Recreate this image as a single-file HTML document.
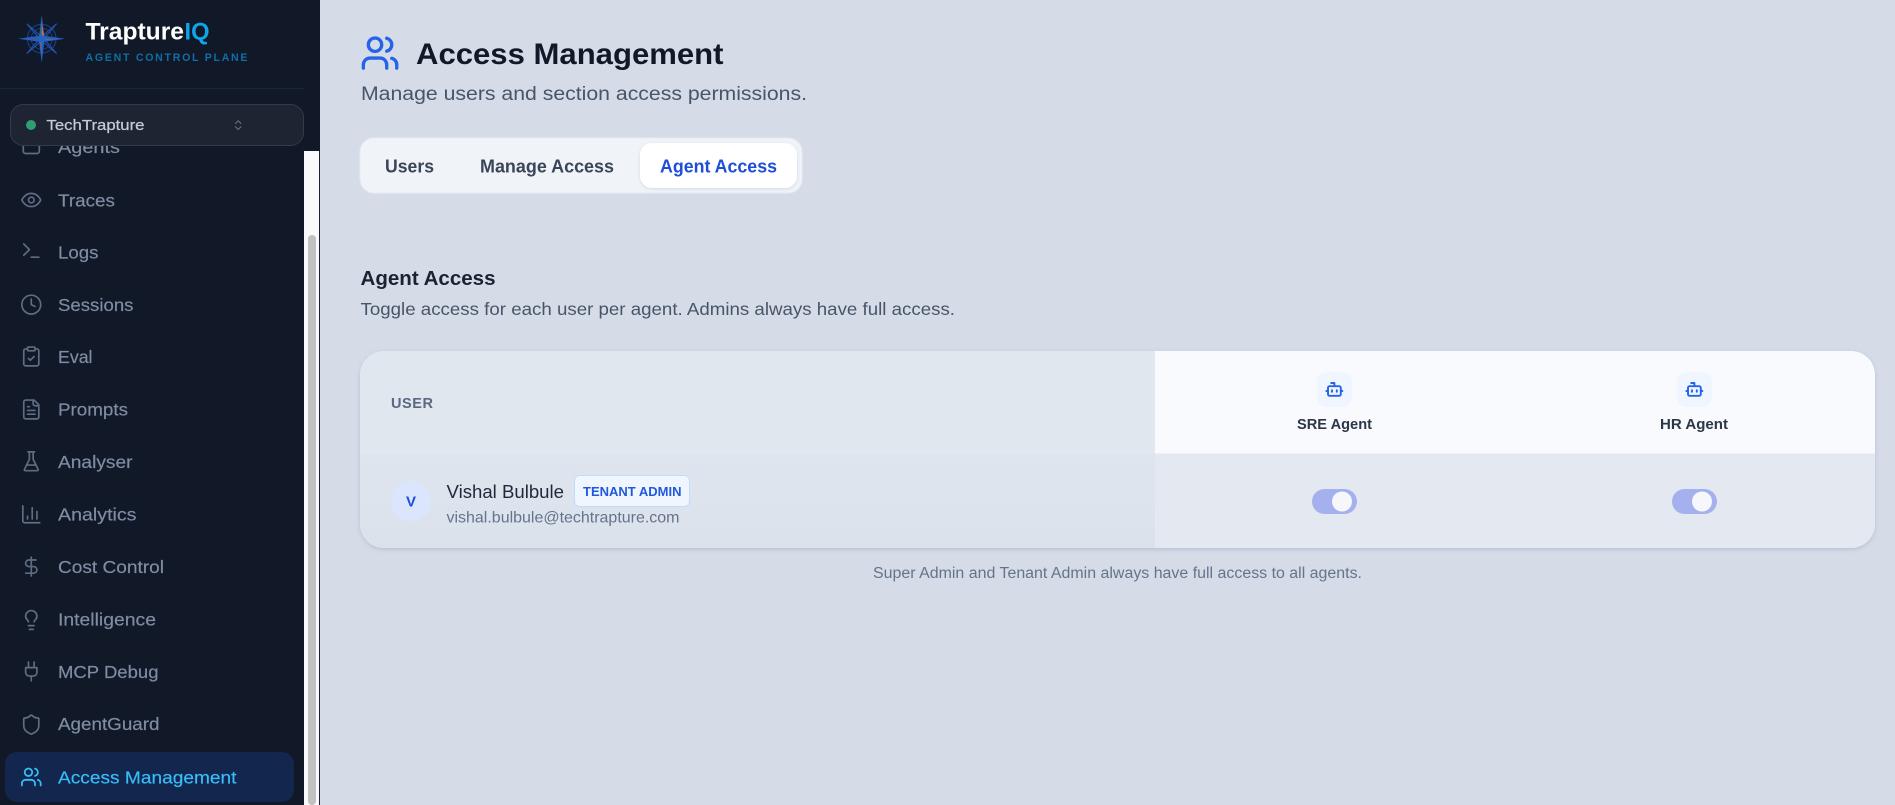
<!DOCTYPE html>
<html lang="en">
<head>
<meta charset="utf-8">
<title>Access Management</title>
<style>
html,body{margin:0;padding:0;width:1895px;height:805px;overflow:hidden;background:#d5dce8}
svg{display:block}
text{font-family:"Liberation Sans",Arial,sans-serif}
.nav text{font-size:17.4px;fill:#7f8da4;stroke:#7f8da4;stroke-width:.18}
.ic{fill:none;stroke:#5f6c82;stroke-width:1.8;stroke-linecap:round;stroke-linejoin:round}
.ic2{fill:none;stroke:#2563eb;stroke-width:2.4;stroke-linecap:round;stroke-linejoin:round}
.b{font-weight:700}
</style>
</head>
<body>
<svg width="1895" height="805" viewBox="0 0 1895 805" xmlns="http://www.w3.org/2000/svg">
<defs>
<clipPath id="card"><rect x="360" y="351" width="1515" height="197" rx="24"/></clipPath>
<filter id="sh" x="-5%" y="-10%" width="110%" height="120%"><feDropShadow dx="0" dy="1.5" stdDeviation="2" flood-color="#64748b" flood-opacity=".28"/></filter>
<filter id="sh2" x="-10%" y="-20%" width="120%" height="150%"><feDropShadow dx="0" dy="1" stdDeviation="1.5" flood-color="#64748b" flood-opacity=".22"/></filter>
<linearGradient id="rowL" x1="0" y1="0" x2="0" y2="1"><stop offset="0" stop-color="#dfe5ee"/><stop offset="1" stop-color="#dce2ec"/></linearGradient>
</defs>

<!-- page -->
<rect width="1895" height="805" fill="#d5dce8"/>

<!-- sidebar -->
<rect width="320" height="805" fill="#111827"/>
<rect x="304" y="151" width="15" height="654" fill="#fafafa"/>
<rect x="308" y="235" width="8" height="570" rx="4" fill="#c1c1c1"/>
<rect x="319" y="151" width="1" height="654" fill="#1a2130"/>

<!-- nav -->
<g class="nav">
<text x="58" y="152.8" textLength="62" lengthAdjust="spacingAndGlyphs">Agents</text>
<text x="58" y="206.3" textLength="57" lengthAdjust="spacingAndGlyphs">Traces</text>
<text x="58" y="258.4" textLength="40.5" lengthAdjust="spacingAndGlyphs">Logs</text>
<text x="58" y="310.8" textLength="75.5" lengthAdjust="spacingAndGlyphs">Sessions</text>
<text x="58" y="363.2" textLength="34.5" lengthAdjust="spacingAndGlyphs">Eval</text>
<text x="58" y="415.6" textLength="70" lengthAdjust="spacingAndGlyphs">Prompts</text>
<text x="58" y="468" textLength="74.5" lengthAdjust="spacingAndGlyphs">Analyser</text>
<text x="58" y="520.5" textLength="78.5" lengthAdjust="spacingAndGlyphs">Analytics</text>
<text x="58" y="572.9" textLength="106" lengthAdjust="spacingAndGlyphs">Cost Control</text>
<text x="58" y="625.3" textLength="98" lengthAdjust="spacingAndGlyphs">Intelligence</text>
<text x="58" y="677.8" textLength="100.5" lengthAdjust="spacingAndGlyphs">MCP Debug</text>
<text x="58" y="730.2" textLength="101.5" lengthAdjust="spacingAndGlyphs">AgentGuard</text>
</g>
<g class="ic">
<rect x="23.3" y="136" width="16" height="17.5" rx="2.4" stroke-width="1.7"/>
<g transform="translate(20,188.7) scale(.94)"><path d="M2 12s3-7 10-7 10 7 10 7-3 7-10 7-10-7-10-7Z"/><circle cx="12" cy="12" r="3"/></g>
<g transform="translate(20,239.3) scale(.94)"><path d="M4 17l6-6-6-6"/><path d="M12 19h8"/></g>
<g transform="translate(20,293.3) scale(.94)"><circle cx="12" cy="12" r="10"/><path d="M12 6v6l4 2"/></g>
<g transform="translate(20,345.2) scale(.94)"><rect x="8" y="2" width="8" height="4" rx="1"/><path d="M16 4h2a2 2 0 0 1 2 2v14a2 2 0 0 1-2 2H6a2 2 0 0 1-2-2V6a2 2 0 0 1 2-2h2"/><path d="m9 14 2 2 4-4"/></g>
<g transform="translate(20,398.2) scale(.94)"><path d="M15 2H6a2 2 0 0 0-2 2v16a2 2 0 0 0 2 2h12a2 2 0 0 0 2-2V7Z"/><path d="M14 2v4a2 2 0 0 0 2 2h4"/><path d="M10 9H8M16 13H8M16 17H8"/></g>
<g transform="translate(20,450) scale(.94)"><path d="M10 2v7.527a2 2 0 0 1-.211.896L4.72 20.55a1 1 0 0 0 .9 1.45h12.76a1 1 0 0 0 .9-1.45l-5.069-10.127A2 2 0 0 1 14 9.527V2"/><path d="M8.5 2h7"/><path d="M7 16h10"/></g>
<g transform="translate(20,503) scale(.94)"><path d="M3 3v16a2 2 0 0 0 2 2h16"/><path d="M18 17V9M13 17V5M8 17v-3"/></g>
<g transform="translate(20,555.3) scale(.94)"><path d="M12 2v20"/><path d="M17 5H9.5a3.5 3.5 0 0 0 0 7h5a3.5 3.5 0 0 1 0 7H6"/></g>
<g transform="translate(20,608.7) scale(.94)"><path d="M15 14c.2-1 .7-1.7 1.5-2.5 1-.9 1.5-2.2 1.5-3.5A6 6 0 0 0 6 8c0 1 .2 2.2 1.5 3.5.7.7 1.3 1.5 1.5 2.5"/><path d="M9 18h6M10 22h4"/></g>
<g transform="translate(20,660.1) scale(.94)"><path d="M12 22v-5M9 8V2M15 8V2"/><path d="M18 8v5a4 4 0 0 1-4 4h-4a4 4 0 0 1-4-4V8Z"/></g>
<g transform="translate(20,713.3) scale(.94)"><path d="M20 13c0 5-3.5 7.5-7.66 8.95a1 1 0 0 1-.67-.01C7.5 20.5 4 18 4 13V6a1 1 0 0 1 1-1c2 0 4.5-1.2 6.24-2.72a1.17 1.17 0 0 1 1.52 0C14.51 3.81 17 5 19 5a1 1 0 0 1 1 1z"/></g>
</g>

<!-- active item -->
<rect x="5" y="752" width="289" height="50" rx="12" fill="#12264e"/>
<g fill="none" stroke="#38bdf8" stroke-width="1.9" stroke-linecap="round" stroke-linejoin="round" transform="translate(20,765.7) scale(.94)"><path d="M16 21v-2a4 4 0 0 0-4-4H6a4 4 0 0 0-4 4v2"/><circle cx="9" cy="7" r="4"/><path d="M22 21v-2a4 4 0 0 0-3-3.87"/><path d="M16 3.13a4 4 0 0 1 0 7.75"/></g>
<text x="58" y="783.3" font-size="17.4" fill="#38bdf8" stroke="#38bdf8" stroke-width=".18" textLength="178.5" lengthAdjust="spacingAndGlyphs">Access Management</text>

<!-- brand header (covers scrolled items) -->
<rect width="320" height="89" fill="#111827"/>
<rect y="88" width="319" height="1" fill="#1d2635"/>
<rect y="89" width="304" height="57" fill="#111827"/>
<rect x="304" y="0" width="15" height="151" fill="#111827"/>

<!-- logo -->
<g transform="translate(41.7,38.7)">
<circle r="14.3" fill="none" stroke="#1b3a7c" stroke-width="1.3"/>
<circle r="10.5" fill="none" stroke="#1b3a7c" stroke-width="1"/>
<path d="M-15-15 L-1.5-3.5 L-3.5-1.5Z M15-15 L1.5-3.5 L3.5-1.5Z M-15 15 L-1.5 3.5 L-3.5 1.5Z M15 15 L1.5 3.5 L3.5 1.5Z" fill="#14295c" stroke="#2557b8" stroke-width=".9"/>
<path d="M0-24 L2.6-3 L23.5 0 L2.6 3 L0 24 L-2.6 3 L-23.5 0 L-2.6-3Z" fill="#2460c4"/>
<path d="M0-16 L2.6-3 L0-3Z" fill="#d4663a"/>
<path d="M0-16 L-2.4-3 L0-3Z" fill="#1f6f8c"/>
<path d="M3 1.5 L17 0.4 L3 0Z" fill="#5d6a80"/>
<path d="M-3 0.6 L-17 0.4 L-3 1.8Z" fill="#4a5a78"/>
<path d="M-.2 3 L-.2 17 L-2.2 3Z" fill="#5d6a80"/>
<circle r="3.6" fill="#2563c9"/>
</g>
<text x="85.5" y="39.4" font-size="24" class="b" fill="#ffffff" textLength="98.5" lengthAdjust="spacingAndGlyphs">Trapture</text>
<text x="184.5" y="39.4" font-size="24" class="b" fill="#0ea5e9" textLength="25" lengthAdjust="spacingAndGlyphs">IQ</text>
<text x="85.5" y="61" font-size="10.6" class="b" fill="#0f6ea6" textLength="162" lengthAdjust="spacing">AGENT CONTROL PLANE</text>

<!-- tenant selector -->
<rect x="10.5" y="104.5" width="293" height="41" rx="13" fill="#1e2431" stroke="#333a49"/>
<circle cx="31" cy="125" r="5" fill="#2f9e73"/>
<text x="46.5" y="130" font-size="15" fill="#c3cbd7" textLength="98" lengthAdjust="spacingAndGlyphs" style="stroke:#c3cbd7;stroke-width:.25">TechTrapture</text>
<g fill="none" stroke="#64748b" stroke-width="1.9" stroke-linecap="round" stroke-linejoin="round" transform="translate(231.6,118.5) scale(.55)"><path d="m7 15 5 5 5-5"/><path d="m7 9 5-5 5 5"/></g>

<!-- header -->
<g fill="none" stroke="#2563eb" stroke-width="2" stroke-linecap="round" stroke-linejoin="round" transform="translate(360,33) scale(1.67)"><path d="M16 21v-2a4 4 0 0 0-4-4H6a4 4 0 0 0-4 4v2"/><circle cx="9" cy="7" r="4"/><path d="M22 21v-2a4 4 0 0 0-3-3.87"/><path d="M16 3.13a4 4 0 0 1 0 7.75"/></g>
<text x="416" y="64.2" font-size="30" class="b" fill="#111827" textLength="307.5" lengthAdjust="spacingAndGlyphs">Access Management</text>
<text x="361" y="100" font-size="19.3" fill="#475569" textLength="446" lengthAdjust="spacingAndGlyphs">Manage users and section access permissions.</text>

<!-- tabs -->
<rect x="360" y="138" width="442" height="55" rx="14" fill="#f0f4f9" stroke="#e6ebf2"/>
<rect x="640" y="143" width="157" height="45" rx="12" fill="#ffffff" filter="url(#sh2)"/>
<text x="385" y="172.3" font-size="18" class="b" fill="#3a4658" textLength="49" lengthAdjust="spacingAndGlyphs">Users</text>
<text x="480" y="172.3" font-size="18" class="b" fill="#3a4658" textLength="134" lengthAdjust="spacingAndGlyphs">Manage Access</text>
<text x="660" y="172.3" font-size="18" class="b" fill="#1d4ed8" textLength="117" lengthAdjust="spacingAndGlyphs">Agent Access</text>

<!-- section -->
<text x="360.5" y="285" font-size="20.5" class="b" fill="#1a2332" textLength="135" lengthAdjust="spacingAndGlyphs">Agent Access</text>
<text x="360.5" y="315" font-size="17.5" fill="#475569" textLength="594.5" lengthAdjust="spacingAndGlyphs">Toggle access for each user per agent. Admins always have full access.</text>

<!-- card -->
<rect x="360" y="351" width="1515" height="197" rx="24" fill="#e2e8f0" filter="url(#sh)"/>
<g clip-path="url(#card)">
<rect x="360" y="351" width="795" height="103" fill="#e1e7ef"/>
<rect x="1155" y="351" width="720" height="103" fill="#f8fafd"/>
<rect x="360" y="454" width="795" height="94" fill="url(#rowL)"/>
<rect x="1155" y="454" width="720" height="94" fill="#e4e9f1"/>
<rect x="1155" y="453.5" width="720" height="1" fill="#e3e8ef"/>
</g>
<text x="391" y="408" font-size="14.5" class="b" fill="#5a6880" textLength="42" lengthAdjust="spacing">USER</text>

<!-- agents -->
<rect x="1317" y="372" width="35" height="35" rx="10" fill="#eff6ff"/>
<g class="ic2" transform="translate(1324.8,379.8) scale(.8)"><path d="M12 8V4H8"/><rect x="4" y="8" width="16" height="12" rx="2"/><path d="M2 14h2M20 14h2M15 13v2M9 13v2"/></g>
<text x="1297" y="429" font-size="15.2" class="b" fill="#2b3648" textLength="75" lengthAdjust="spacingAndGlyphs">SRE Agent</text>
<rect x="1677" y="372" width="35" height="35" rx="10" fill="#eff6ff"/>
<g class="ic2" transform="translate(1684.8,379.8) scale(.8)"><path d="M12 8V4H8"/><rect x="4" y="8" width="16" height="12" rx="2"/><path d="M2 14h2M20 14h2M15 13v2M9 13v2"/></g>
<text x="1660" y="429" font-size="15.2" class="b" fill="#2b3648" textLength="68" lengthAdjust="spacingAndGlyphs">HR Agent</text>

<!-- user row -->
<circle cx="411" cy="501" r="20" fill="#dbe6fd"/>
<text x="411" y="506.5" font-size="15" class="b" fill="#1d4ed8" text-anchor="middle">V</text>
<text x="446.5" y="498" font-size="18" fill="#1e293b" textLength="117.5" lengthAdjust="spacingAndGlyphs">Vishal Bulbule</text>
<rect x="574.5" y="475.5" width="115" height="31" rx="5" fill="#eff6ff" stroke="#bfdbfe"/>
<text x="583" y="496" font-size="13" class="b" fill="#2158dc" textLength="98.5" lengthAdjust="spacingAndGlyphs">TENANT ADMIN</text>
<text x="446.5" y="522.5" font-size="15.7" fill="#64748b" textLength="233" lengthAdjust="spacingAndGlyphs">vishal.bulbule@techtrapture.com</text>

<!-- toggles -->
<rect x="1312" y="489" width="45" height="25" rx="12.5" fill="#a5b0ef"/>
<circle cx="1342" cy="501.5" r="10" fill="#f6f7fb"/>
<rect x="1672" y="489" width="45" height="25" rx="12.5" fill="#a5b0ef"/>
<circle cx="1702" cy="501.5" r="10" fill="#f6f7fb"/>

<text x="873" y="578" font-size="15.5" fill="#64748b" textLength="489" lengthAdjust="spacingAndGlyphs">Super Admin and Tenant Admin always have full access to all agents.</text>
</svg>
</body>
</html>
